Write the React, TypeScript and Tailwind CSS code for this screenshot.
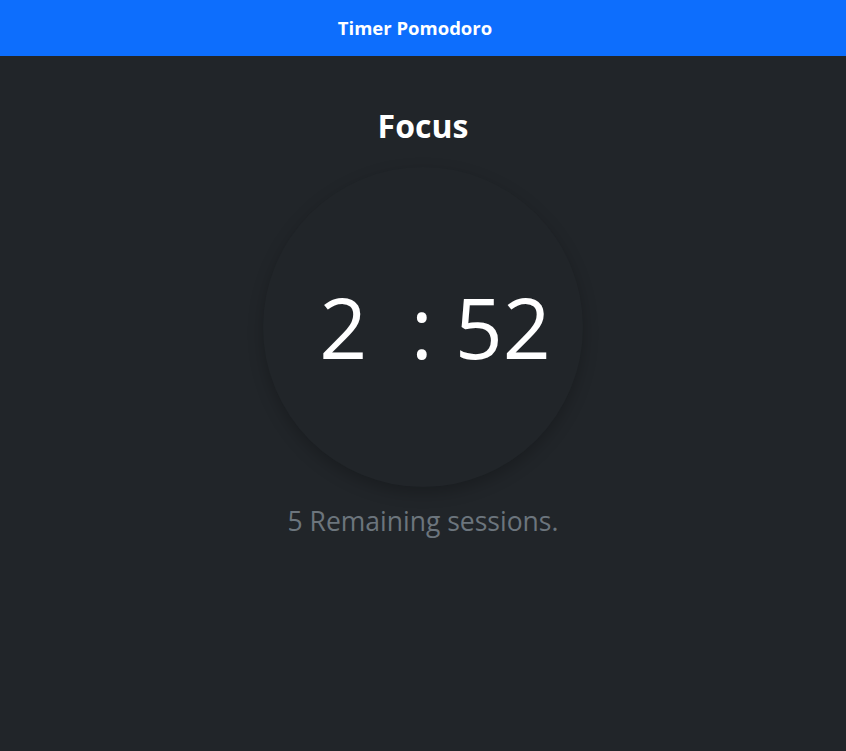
import React from 'react';

const App: React.FC = () => {
  const minutes = 2;
  const seconds = 52;
  const sessions = 5;

  return (
    <div className="min-h-screen w-full bg-[#212529] font-['Open_Sans',sans-serif] text-white">
      {/* Top bar */}
      <header className="h-14 w-full bg-[#0d6efd] flex items-center justify-center pr-4">
        <h1 className="text-[18.5px] font-bold leading-none">Timer Pomodoro</h1>
      </header>

      <main className="flex flex-col items-center pt-[51px]">
        <h2 className="text-[32px] font-bold leading-[38px]">Focus</h2>

        {/* Clock face */}
        <div className="mt-[22px] w-80 h-80 rounded-full bg-[#212529] shadow-[0_6px_16px_rgba(0,0,0,0.22)] flex items-center justify-center">
          <span className="text-[84px] leading-none font-normal whitespace-pre pl-6">
            {minutes}  : {seconds}
          </span>
        </div>

        <p className="mt-4 text-[26.5px] leading-9 text-[#6c757d]">
          {sessions} Remaining sessions.
        </p>
      </main>
    </div>
  );
};

export default App;
